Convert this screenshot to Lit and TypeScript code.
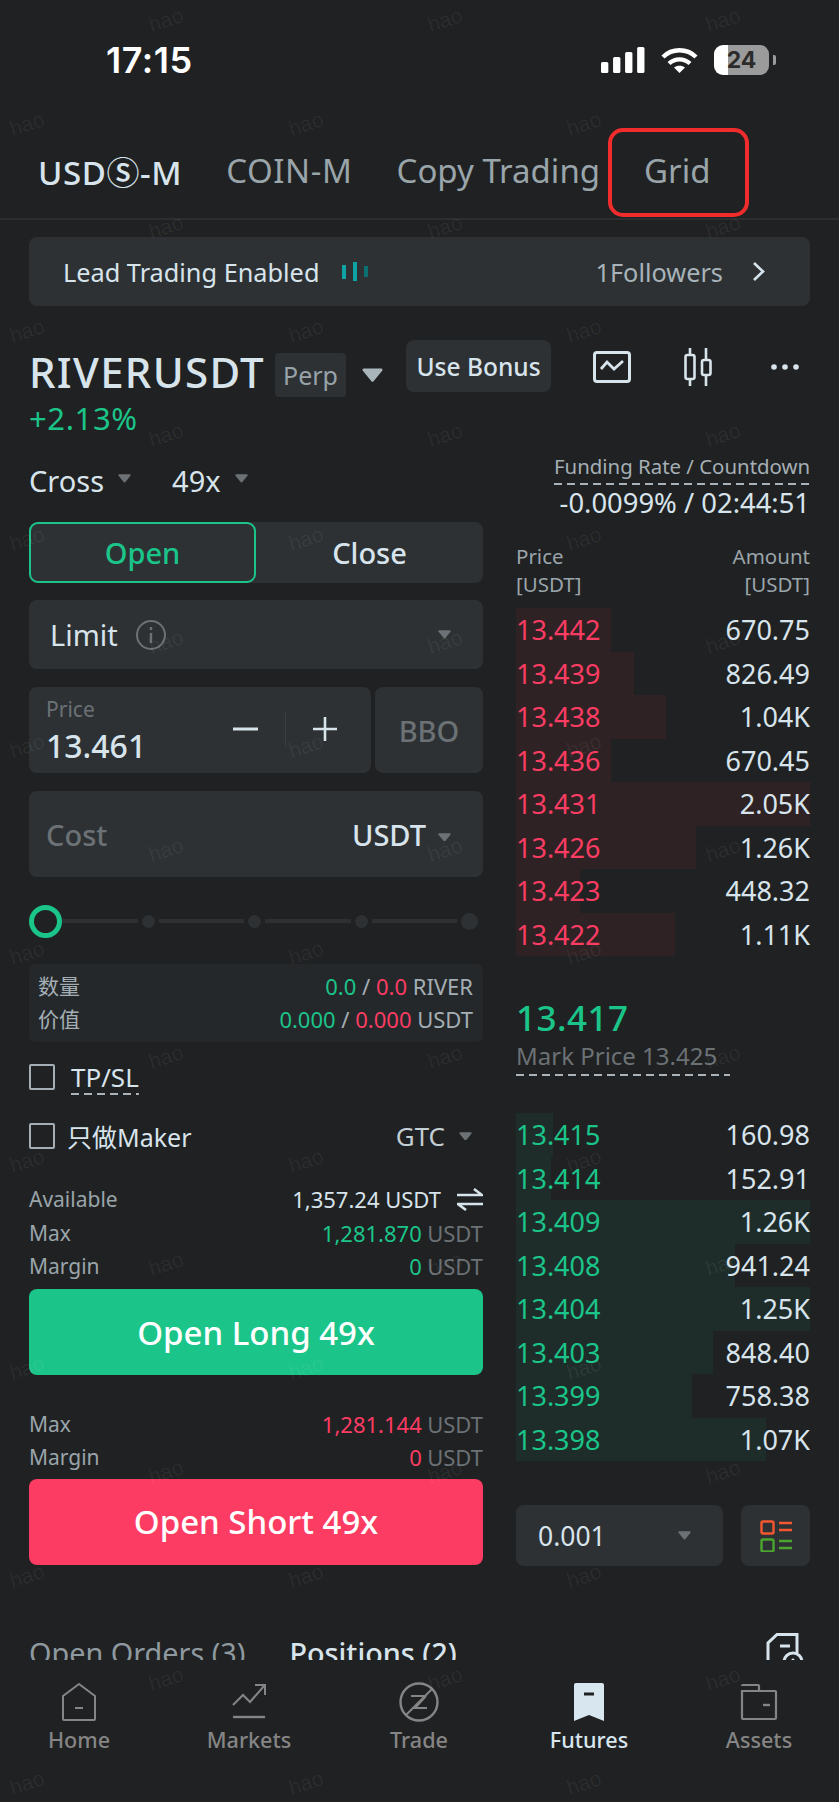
import {LitElement, css, html, svg} from 'lit';
import {customElement} from 'lit/decorators.js';

const asks = [
	['13.442', '670.75', 95],
	['13.439', '826.49', 118],
	['13.438', '1.04K', 150],
	['13.436', '670.45', 95],
	['13.431', '2.05K', 294],
	['13.426', '1.26K', 180],
	['13.423', '448.32', 64],
	['13.422', '1.11K', 159]
];

const bids = [
	['13.415', '160.98', 37],
	['13.414', '152.91', 35],
	['13.409', '1.26K', 294],
	['13.408', '941.24', 219],
	['13.404', '1.25K', 294],
	['13.403', '848.40', 197],
	['13.399', '758.38', 176],
	['13.398', '1.07K', 250]
];

// faint staggered watermark over the whole screen
const marks: {x: number; y: number}[] = [];
for (let row = 0; row < 18; row++) {
	const odd = row % 2 === 1;
	const y = 20 + row * 103.7;
	for (let col = 0; col < 3; col++) {
		marks.push({x: (odd ? 27 : 166) + col * 278.5, y});
	}
}

const caret = (w: number, color = '#6b7175') => html`
	<svg class="caret" width=${w} height=${w * 0.68} viewBox="0 0 22 15">
		<path d="M2 2H20L11 13Z" fill=${color} stroke=${color} stroke-width="3" stroke-linejoin="round" />
	</svg>
`;

const navIcons = {
	home: svg`<path d="M25 7 L41 19 V42 a1 1 0 0 1 -1 1 H10 a1 1 0 0 1 -1 -1 V19 Z" fill="none" stroke="#858585" stroke-width="2" stroke-linejoin="round"/><path d="M21 31H29" stroke="#858585" stroke-width="2"/>`,
	markets: svg`<path d="M9 28 L19 18 L26 25 L40 9 M31 8 H41 V18" fill="none" stroke="#858585" stroke-width="2"/><path d="M9 40H41" stroke="#858585" stroke-width="2.4"/>`,
	trade: svg`<circle cx="25" cy="25" r="18.5" fill="none" stroke="#858585" stroke-width="2.4"/><path d="M12 38 L38 12 M17 19 H32 M19 31 H33 M32 19 L21 31" fill="none" stroke="#858585" stroke-width="2"/>`,
	futures: svg`<path d="M10 8 a2 2 0 0 1 2 -2 H38 a2 2 0 0 1 2 2 V44 L25 38 L10 44 Z" fill="#d8e6ef"/><path d="M20 17H30" stroke="#202122" stroke-width="3"/>`,
	assets: svg`<path d="M8 9 a1 1 0 0 1 1 -1 H24 a1 1 0 0 1 1 1 V14 M8 14 H41 a1 1 0 0 1 1 1 V41 a1 1 0 0 1 -1 1 H9 a1 1 0 0 1 -1 -1 Z" fill="none" stroke="#858585" stroke-width="2.2"/><path d="M29 28H36" stroke="#858585" stroke-width="2.4"/>`
};

@customElement('app-root')
export class AppRoot extends LitElement {
	static styles = css`
		:host {
			background: #202122;
			color: #d8e4ec;
			display: block;
			font-family: 'Noto Sans', 'Noto Sans CJK SC', sans-serif;
			height: 1802px;
			overflow: hidden;
			position: relative;
			width: 839px;
		}

		.status {
			align-items: center;
			display: flex;
			height: 120px;
			padding: 0 63px 0 106px;
		}

		.time {
			color: #fff;
			font-family: Inter, sans-serif;
			font-size: 36px;
			font-weight: 600;
			letter-spacing: 0.5px;
		}

		.status-icons {
			align-items: center;
			display: flex;
			gap: 16px;
			margin-left: auto;
		}

		.battery {
			align-items: center;
			background: linear-gradient(90deg, #fff 0 14px, #9b9b9b 14px);
			border-radius: 9px;
			color: #2b2b2b;
			display: flex;
			font-family: Inter, sans-serif;
			font-size: 23px;
			font-weight: 700;
			height: 30px;
			justify-content: center;
			margin-right: -12px;
			width: 55px;
		}

		.nub {
			background: #9b9b9b;
			border-radius: 0 2px 2px 0;
			height: 10px;
			width: 3px;
		}

		.tabs {
			align-items: center;
			border-bottom: 2px solid #2c2e30;
			box-sizing: border-box;
			display: flex;
			font-size: 33px;
			gap: 44px;
			height: 100px;
			padding: 3px 0 0 38px;
		}

		.tab {
			color: #99a5aa;
			position: relative;
			white-space: nowrap;
		}

		.tab.wide {
			letter-spacing: 0.6px;
		}

		.tab.on {
			color: #d8e4ec;
			font-weight: 500;
		}

		.tab.grid::after {
			border: 4px solid #f02c2c;
			border-radius: 15px;
			bottom: -24px;
			box-sizing: border-box;
			content: '';
			left: -36px;
			position: absolute;
			right: -38px;
			top: -20px;
		}

		.banner {
			align-items: center;
			background: #2d3134;
			border-radius: 8px;
			display: flex;
			font-size: 25.3px;
			height: 69px;
			margin: 17px 29px 0;
			padding: 0 44px 0 34px;
		}

		.bars {
			align-items: center;
			display: flex;
			gap: 7px;
			margin-left: 23px;
		}

		.bars i {
			background: #0fa3a3;
			display: block;
			height: 14px;
			width: 4px;
		}

		.bars i:nth-child(2) {
			height: 19px;
		}

		.bars i:nth-child(3) {
			background: #0c6f70;
			height: 11px;
		}

		.followers {
			color: #a8b4ba;
			margin-left: auto;
			margin-right: 28px;
		}

		.head {
			display: flex;
			height: 56px;
			margin-top: 34px;
			padding-left: 29px;
		}

		.symbol {
			font-size: 42px;
			font-weight: 500;
			letter-spacing: 1.3px;
			line-height: 56px;
			margin-right: 10px;
			padding-top: 4px;
		}

		.perp {
			align-items: center;
			background: #2d3134;
			border-radius: 4px;
			color: #98a3a9;
			display: flex;
			font-size: 25px;
			height: 44px;
			justify-content: center;
			margin-top: 13px;
			width: 71px;
		}

		.head .caret {
			margin: 28px 23px 0 16px;
		}

		.bonus {
			align-items: center;
			background: #2d3134;
			border-radius: 8px;
			display: flex;
			font-size: 24.5px;
			font-weight: 500;
			height: 52px;
			justify-content: center;
			width: 145px;
		}

		.tools {
			margin: 11px 0 0 42px;
		}

		.main {
			column-gap: 33px;
			display: grid;
			grid-template-columns: 454px 294px;
			padding-left: 29px;
		}

		.change {
			color: #1bc58a;
			font-size: 31px;
			letter-spacing: 0.6px;
			line-height: 44px;
		}

		.mode {
			align-items: center;
			display: flex;
			font-size: 29px;
			height: 44px;
			margin-top: 18px;
		}

		.mode .caret {
			margin: 0 41px 3px 14px;
		}

		.segment {
			background: #2d3134;
			border-radius: 8px;
			display: flex;
			font-size: 29px;
			font-weight: 500;
			height: 61px;
			margin-top: 20px;
		}

		.segment div {
			align-items: center;
			box-sizing: border-box;
			display: flex;
			flex: 1;
			justify-content: center;
		}

		.segment .open {
			border: 2.5px solid #1bc58a;
			border-radius: 9px;
			color: #1bc58a;
			flex: none;
			width: 227px;
		}

		.field {
			align-items: center;
			background: #2d3134;
			border-radius: 8px;
			box-sizing: border-box;
			display: flex;
			font-size: 29px;
		}

		.limit {
			height: 69px;
			margin-top: 17px;
			padding: 0 32px 0 21px;
		}

		.info-icon {
			margin-left: 18px;
		}

		.push {
			margin-left: auto;
		}

		.limit .push {
			display: flex;
		}

		.price-row {
			display: flex;
			gap: 4px;
			margin-top: 18px;
		}

		.price {
			height: 86px;
			padding-left: 17px;
			width: 342px;
		}

		.price small {
			color: #6b7175;
			display: block;
			font-size: 21px;
			line-height: 28px;
			margin-top: -1px;
		}

		.price strong {
			display: block;
			font-size: 32px;
			font-weight: 500;
			line-height: 36px;
			margin-top: 5px;
		}

		.steps {
			align-items: center;
			display: flex;
			margin-left: auto;
			margin-right: 34px;
			margin-top: -2px;
		}

		.steps span {
			background: #3a3f42;
			height: 34px;
			margin: 0 27px;
			width: 1px;
		}

		.bbo {
			color: #6b7175;
			flex: 1;
			font-weight: 500;
			height: 86px;
			justify-content: center;
		}

		.cost {
			height: 86px;
			margin-top: 18px;
			padding: 0 32px 0 17px;
		}

		.cost b {
			color: #6b7175;
			font-weight: 500;
		}

		.cost em {
			font-style: normal;
			font-weight: 500;
			margin-right: 12px;
		}

		.cost .caret {
			margin-top: 6px;
		}

		.slider {
			align-items: center;
			display: flex;
			gap: 4px;
			height: 34px;
			margin-top: 27px;
			padding-right: 5px;
		}

		.thumb {
			border: 5px solid #1bc58a;
			border-radius: 50%;
			box-sizing: border-box;
			height: 33px;
			margin-right: -4px;
			width: 33px;
		}

		.seg {
			background: #2d3134;
			flex: 1;
			height: 4px;
		}

		.seg.first {
			flex: 0 0 76px;
		}

		.dot {
			background: #2d3134;
			border-radius: 50%;
			height: 13px;
			width: 13px;
		}

		.dot.end {
			height: 17px;
			width: 17px;
		}

		.qty {
			background: #25282b;
			border-radius: 6px;
			box-sizing: border-box;
			font-size: 22px;
			height: 78px;
			margin-top: 26px;
			padding: 6px 10px 0 9px;
		}

		.qty div {
			color: #a4afb5;
			display: flex;
			justify-content: space-between;
			line-height: 33px;
		}

		.qty div > span:first-child {
			font-size: 21px;
		}

		.up {
			color: #1bc58a;
		}

		.down {
			color: #fb3c63;
		}

		.check {
			align-items: center;
			display: flex;
			font-size: 25px;
			height: 26px;
		}

		.check i {
			border: 2px solid #a4afb5;
			border-radius: 2px;
			box-sizing: border-box;
			display: block;
			height: 26px;
			margin-right: 14px;
			width: 26px;
		}

		.check.tpsl {
			font-size: 26px;
			margin-top: 22px;
		}

		.check.tpsl i {
			margin-right: 16px;
		}

		.check.tpsl .dash {
			padding-bottom: 0;
		}

		.check.maker {
			margin-top: 33px;
		}

		.check.maker i {
			margin-right: 12px;
		}

		.gtc {
			color: #c3ced4;
			font-size: 26px;
			margin-right: 14px;
		}

		.caret-gap {
			width: 11px;
		}

		.dash {
			background-image: repeating-linear-gradient(90deg, #a9b3b9 0 8px, transparent 8px 13px);
			background-position: bottom;
			background-repeat: no-repeat;
			background-size: 100% 2px;
			padding-bottom: 5px;
		}

		.line {
			align-items: center;
			color: #9aa5ab;
			display: flex;
			font-size: 21px;
			height: 32.5px;
			justify-content: space-between;
		}

		.line span span {
			font-size: 22px;
		}

		.line.avail {
			height: 36px;
			margin-top: 32px;
		}

		.avail-value {
			align-items: center;
			color: #d8e4ec;
			display: flex;
			font-size: 22px;
			gap: 16px;
		}

		.line .unit {
			color: #6b7175;
		}

		.line.max-short {
			margin-top: 33px;
		}

		.action {
			align-items: center;
			border-radius: 8px;
			color: #fff;
			display: flex;
			font-size: 33px;
			font-weight: 500;
			height: 86px;
			justify-content: center;
			margin-top: 7px;
		}

		.action.long {
			background: #1bc58a;
		}

		.action.short {
			background: #fd3c63;
			margin-top: 5.5px;
		}

		.funding {
			align-items: flex-end;
			display: flex;
			flex-direction: column;
			padding-top: 56px;
		}

		.funding .label {
			color: #a4afb5;
			font-size: 20.4px;
			line-height: 28px;
			text-align: right;
			white-space: nowrap;
			width: 256px;
		}

		.funding .value {
			font-size: 27.4px;
			line-height: 36px;
			white-space: nowrap;
		}

		.book-head {
			color: #9aa5ab;
			display: flex;
			font-size: 20.5px;
			justify-content: space-between;
			line-height: 28px;
			margin-top: 21px;
		}

		.book-head div:last-child {
			text-align: right;
		}

		.rows {
			margin-top: 10px;
		}

		.row {
			align-items: center;
			display: flex;
			font-size: 27px;
			height: 43.5px;
			justify-content: space-between;
			position: relative;
		}

		.depth {
			bottom: 0;
			left: 0;
			position: absolute;
			top: 0;
		}

		.rows.a .depth {
			background: #2f2224;
		}

		.rows.b .depth {
			background: #1f2d2a;
		}

		.row span {
			position: relative;
		}

		.last {
			color: #1bc58a;
			font-size: 35px;
			font-weight: 500;
			letter-spacing: 0.5px;
			line-height: 44px;
			margin-top: 40px;
		}

		.mark {
			color: #6b7175;
			font-size: 24px;
			height: 31px;
			line-height: 32px;
			white-space: nowrap;
			width: 214px;
		}

		.rows.b {
			margin-top: 37px;
		}

		.depth-row {
			display: flex;
			gap: 18px;
			margin-top: 44px;
		}

		.select {
			font-size: 26.5px;
			height: 61px;
			justify-content: space-between;
			padding: 0 32px 0 22px;
			width: 207px;
		}

		.layout-btn {
			flex: 1;
			height: 61px;
			justify-content: center;
		}

		.orders {
			align-items: flex-start;
			display: flex;
			font-size: 28.8px;
			height: 30px;
			line-height: 46px;
			margin-top: 64px;
			overflow: hidden;
			padding: 0 35px 0 29px;
		}

		.orders span {
			color: #8f9aa0;
			margin-right: 44px;
			white-space: nowrap;
		}

		.orders .on {
			color: #d8e4ec;
			font-weight: 500;
		}

		.orders svg {
			margin-left: auto;
			margin-top: 3px;
		}

		.nav {
			display: grid;
			grid-template-columns: repeat(5, 170px);
			margin: 22px -6px 0;
		}

		.nav div {
			align-items: center;
			color: #858585;
			display: flex;
			flex-direction: column;
			font-size: 21.6px;
			font-weight: 500;
		}

		.nav div.on {
			color: #d8e6ef;
		}

		.nav svg {
			margin: -5px 0;
		}

		.nav span {
			line-height: 30px;
			margin-top: 3px;
		}

		.watermark {
			inset: 0;
			pointer-events: none;
			position: absolute;
		}

		.watermark span {
			color: rgb(255 255 255 / 6%);
			font-family: 'Liberation Sans', sans-serif;
			font-size: 21px;
			position: absolute;
			transform: translate(-50%, -50%) rotate(-18deg);
		}
	`;

	renderBook(rows: (string | number)[][], kind: 'a' | 'b') {
		return html`
			<div class="rows ${kind}">
				${rows.map(
					([price, amount, width]) => html`
						<div class="row">
							<i class="depth" style="width:${width}px"></i>
							<span class=${kind === 'a' ? 'down' : 'up'}>${price}</span>
							<span>${amount}</span>
						</div>
					`
				)}
			</div>
		`;
	}

	render() {
		return html`
			<div class="status">
				<div class="time">17:15</div>
				<div class="status-icons">
					<svg width="44" height="26" viewBox="0 0 42 26" preserveAspectRatio="none" fill="#fff">
						<rect x="0" y="15" width="7" height="11" rx="1.5" />
						<rect x="11.5" y="10" width="7" height="16" rx="1.5" />
						<rect x="23" y="5" width="7" height="21" rx="1.5" />
						<rect x="34.5" y="0" width="7" height="26" rx="1.5" />
					</svg>
					<svg width="37" height="27" viewBox="0 0 37 27" fill="none" stroke="#fff" stroke-width="4.4">
						<path d="M2 10 C11 1 26 1 35 10" />
						<path d="M8 16.5 C14 11 23 11 29 16.5" />
						<path d="M18.5 26 L13 20.5 C16 18 21 18 24 20.5 Z" fill="#fff" stroke="none" />
					</svg>
					<div class="battery">24</div>
					<div class="nub"></div>
				</div>
			</div>

			<div class="tabs">
				<div class="tab on wide">USDⓈ-M</div>
				<div class="tab wide">COIN-M</div>
				<div class="tab">Copy Trading</div>
				<div class="tab grid">Grid</div>
			</div>

			<div class="banner">
				<span>Lead Trading Enabled</span>
				<div class="bars"><i></i><i></i><i></i></div>
				<span class="followers">1Followers</span>
				<svg width="15" height="21" viewBox="0 0 15 21" fill="none" stroke="#d8e4ec" stroke-width="2.6">
					<path d="M3 2L12 10.5L3 19" />
				</svg>
			</div>

			<div class="head">
				<div class="symbol">RIVERUSDT</div>
				<div class="perp">Perp</div>
				${caret(21, '#a9b5ba')}
				<div class="bonus">Use Bonus</div>
				<svg class="tools" width="38" height="32" viewBox="0 0 38 32" fill="none" stroke="#d8e4ec" stroke-width="3">
					<rect x="1.5" y="1.5" width="35" height="29" rx="2.5" />
					<path d="M8 18L14 11L21 18L30 10" stroke-width="2.8" />
				</svg>
				<svg class="tools" style="margin:8px 0 0 53px" width="28" height="38" viewBox="0 0 28 38" fill="none" stroke="#d8e4ec" stroke-width="2.6">
					<rect x="1.5" y="7" width="9" height="24" rx="2" />
					<path d="M6 0V7M6 31V38" />
					<rect x="18" y="12" width="8.5" height="15" rx="2" />
					<path d="M22 0V12M22 27V38" />
				</svg>
				<svg class="tools" style="margin:24px 0 0 59px" width="28" height="6" viewBox="0 0 28 6" fill="#d8e4ec">
					<circle cx="3" cy="3" r="2.8" />
					<circle cx="14" cy="3" r="2.8" />
					<circle cx="25" cy="3" r="2.8" />
				</svg>
			</div>

			<div class="main">
				<div>
					<div class="change">+2.13%</div>
					<div class="mode">
						<span>Cross</span>${caret(13)}
						<span>49x</span>${caret(13)}
					</div>
					<div class="segment">
						<div class="open">Open</div>
						<div>Close</div>
					</div>
					<div class="field limit">
						<span>Limit</span>
						<svg class="info-icon" width="30" height="30" viewBox="0 0 30 30" fill="none" stroke="#6b7175" stroke-width="2">
							<circle cx="15" cy="15" r="14" />
							<path d="M15 13V23M15 7V10" stroke-width="2.4" />
						</svg>
						<span class="push">${caret(13)}</span>
					</div>
					<div class="price-row">
						<div class="field price">
							<div>
								<small>Price</small>
								<strong>13.461</strong>
							</div>
							<div class="steps">
								<svg width="25" height="4" viewBox="0 0 25 4"><path d="M0 2H25" stroke="#d8e4ec" stroke-width="3" /></svg>
								<span></span>
								<svg width="24" height="24" viewBox="0 0 24 24"><path d="M0 12H24M12 0V24" stroke="#d8e4ec" stroke-width="2.6" /></svg>
							</div>
						</div>
						<div class="field bbo">BBO</div>
					</div>
					<div class="field cost">
						<b>Cost</b>
						<em class="push">USDT</em>
						${caret(13)}
					</div>
					<div class="slider">
						<div class="thumb"></div>
						<div class="seg first"></div>
						<div class="dot"></div>
						<div class="seg"></div>
						<div class="dot"></div>
						<div class="seg"></div>
						<div class="dot"></div>
						<div class="seg"></div>
						<div class="dot end"></div>
					</div>
					<div class="qty">
						<div>
							<span>数量</span>
							<span><span class="up">0.0</span> / <span class="down">0.0</span> RIVER</span>
						</div>
						<div>
							<span>价值</span>
							<span><span class="up">0.000</span> / <span class="down">0.000</span> USDT</span>
						</div>
					</div>
					<div class="check tpsl">
						<i></i>
						<span class="dash">TP/SL</span>
					</div>
					<div class="check maker">
						<i></i>
						<span>只做Maker</span>
						<span class="push gtc">GTC</span>
						${caret(13)}
						<span class="caret-gap"></span>
					</div>
					<div class="line avail">
						<span>Available</span>
						<span class="avail-value">
							1,357.24 USDT
							<svg width="26" height="23" viewBox="0 0 26 23" fill="none" stroke="#d8e4ec" stroke-width="2.6">
								<path d="M0 7H25L17 1M26 16H1L9 22" />
							</svg>
						</span>
					</div>
					<div class="line">
						<span>Max</span>
						<span><span class="up">1,281.870</span> <span class="unit">USDT</span></span>
					</div>
					<div class="line">
						<span>Margin</span>
						<span><span class="up">0</span> <span class="unit">USDT</span></span>
					</div>
					<div class="action long">Open Long 49x</div>
					<div class="line max-short">
						<span>Max</span>
						<span><span class="down">1,281.144</span> <span class="unit">USDT</span></span>
					</div>
					<div class="line">
						<span>Margin</span>
						<span><span class="down">0</span> <span class="unit">USDT</span></span>
					</div>
					<div class="action short">Open Short 49x</div>
				</div>

				<div>
					<div class="funding">
						<div class="label dash">Funding Rate / Countdown</div>
						<div class="value">-0.0099% / 02:44:51</div>
					</div>
					<div class="book-head">
						<div>Price<br />[USDT]</div>
						<div>Amount<br />[USDT]</div>
					</div>
					${this.renderBook(asks, 'a')}
					<div class="last">13.417</div>
					<div class="mark dash">Mark Price 13.425</div>
					${this.renderBook(bids, 'b')}
					<div class="depth-row">
						<div class="field select">
							<span>0.001</span>
							${caret(13)}
						</div>
						<div class="field layout-btn">
							<svg width="32" height="32" viewBox="0 0 32 32" fill="none" stroke-width="2.4">
								<rect x="1.5" y="1.5" width="12" height="12" rx="1.5" stroke="#f4572f" />
								<path d="M19 3H32M19 10H32" stroke="#f4572f" />
								<rect x="1.5" y="19.5" width="12" height="12" rx="1.5" stroke="#4ba52e" />
								<path d="M19 21H32M19 28H32" stroke="#4ba52e" />
							</svg>
						</div>
					</div>
				</div>
			</div>

			<div class="orders">
				<span>Open Orders (3)</span>
				<span class="on">Positions (2)</span>
				<svg width="38" height="42" viewBox="0 0 38 42" fill="none" stroke="#d8e4ec" stroke-width="3">
					<path d="M2 28V10L11 1.5H31V20" />
					<path d="M14 13H24" />
					<circle cx="27" cy="29" r="9" fill="#202122" />
					<circle cx="27" cy="27" r="1.6" fill="#d8e4ec" stroke="none" />
				</svg>
			</div>

			<div class="nav">
				${[
					['Home', navIcons.home],
					['Markets', navIcons.markets],
					['Trade', navIcons.trade],
					['Futures', navIcons.futures],
					['Assets', navIcons.assets]
				].map(
					([label, icon]) => html`
						<div class=${label === 'Futures' ? 'on' : ''}>
							<svg width="50" height="50" viewBox="0 0 50 50">${icon}</svg>
							<span>${label}</span>
						</div>
					`
				)}
			</div>

			<div class="watermark">
				${marks.map(m => html`<span style="left:${m.x}px;top:${m.y}px">hao</span>`)}
			</div>
		`;
	}
}
